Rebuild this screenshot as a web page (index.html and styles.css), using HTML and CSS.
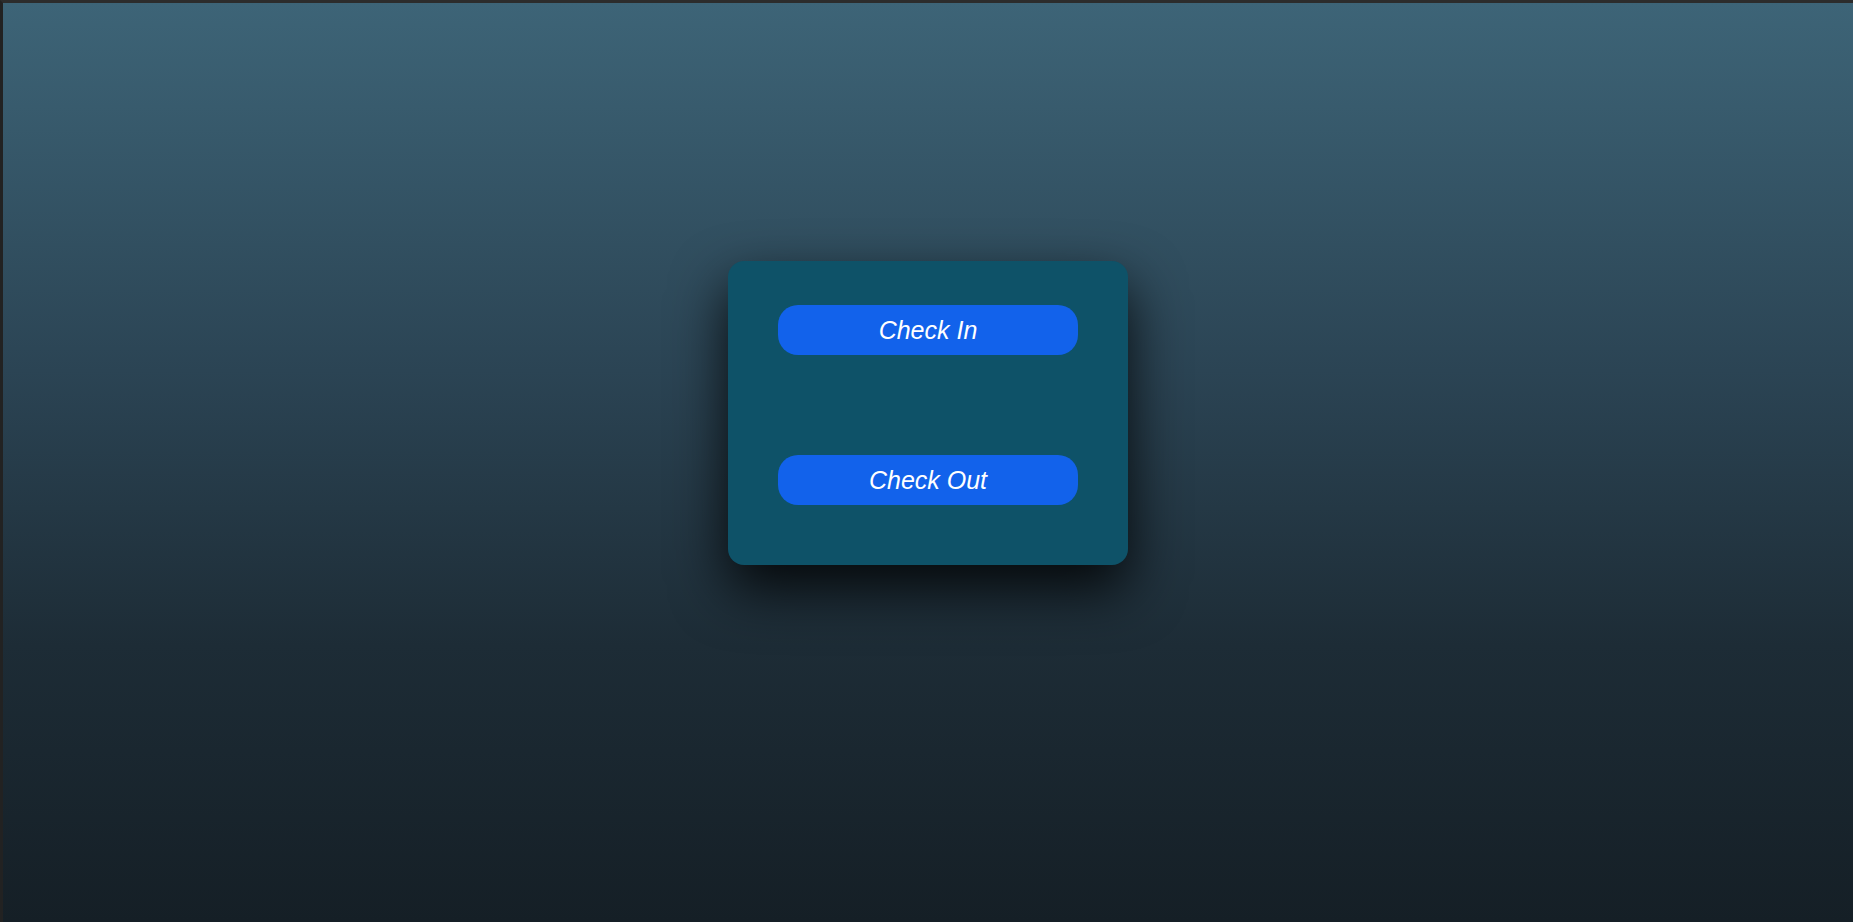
FILE: index.html
```html
<!DOCTYPE html>
<html lang="en">
<head>
<meta charset="utf-8">
<title>Check In / Check Out</title>
<link rel="stylesheet" href="styles.css">
</head>
<body>
<main class="page">
  <section class="card">
    <button class="action" type="button">Check In</button>
    <button class="action" type="button">Check Out</button>
  </section>
</main>
</body>
</html>
```
FILE: styles.css
```css
html, body {
  margin: 0;
  padding: 0;
  height: 100%;
}
body {
  font-family: "Liberation Sans", Arial, sans-serif;
  background: #1a1a1a;
}
.page {
  box-sizing: border-box;
  height: 922px;
  border-top: 3px solid #2c2c2c;
  border-left: 3px solid #222;
  background: linear-gradient(to bottom, #3d6477 0%, #2b4454 40%, #1d2c36 70%, #151f26 100%);
  display: flex;
  justify-content: center;
  align-items: flex-start;
  padding-top: 258px;
}
.card {
  box-sizing: border-box;
  width: 400px;
  height: 304px;
  background: #0e5268;
  border-radius: 16px;
  padding: 44px 50px 0;
  display: flex;
  flex-direction: column;
  gap: 100px;
  box-shadow: 0 24px 55px rgba(0, 0, 0, 0.85);
}
.action {
  width: 300px;
  height: 50px;
  border: none;
  border-radius: 20px;
  background: #1262eb;
  color: #ffffff;
  font-family: "Liberation Sans", Arial, sans-serif;
  font-style: italic;
  font-size: 25px;
  padding: 0;
  cursor: pointer;
}
```
